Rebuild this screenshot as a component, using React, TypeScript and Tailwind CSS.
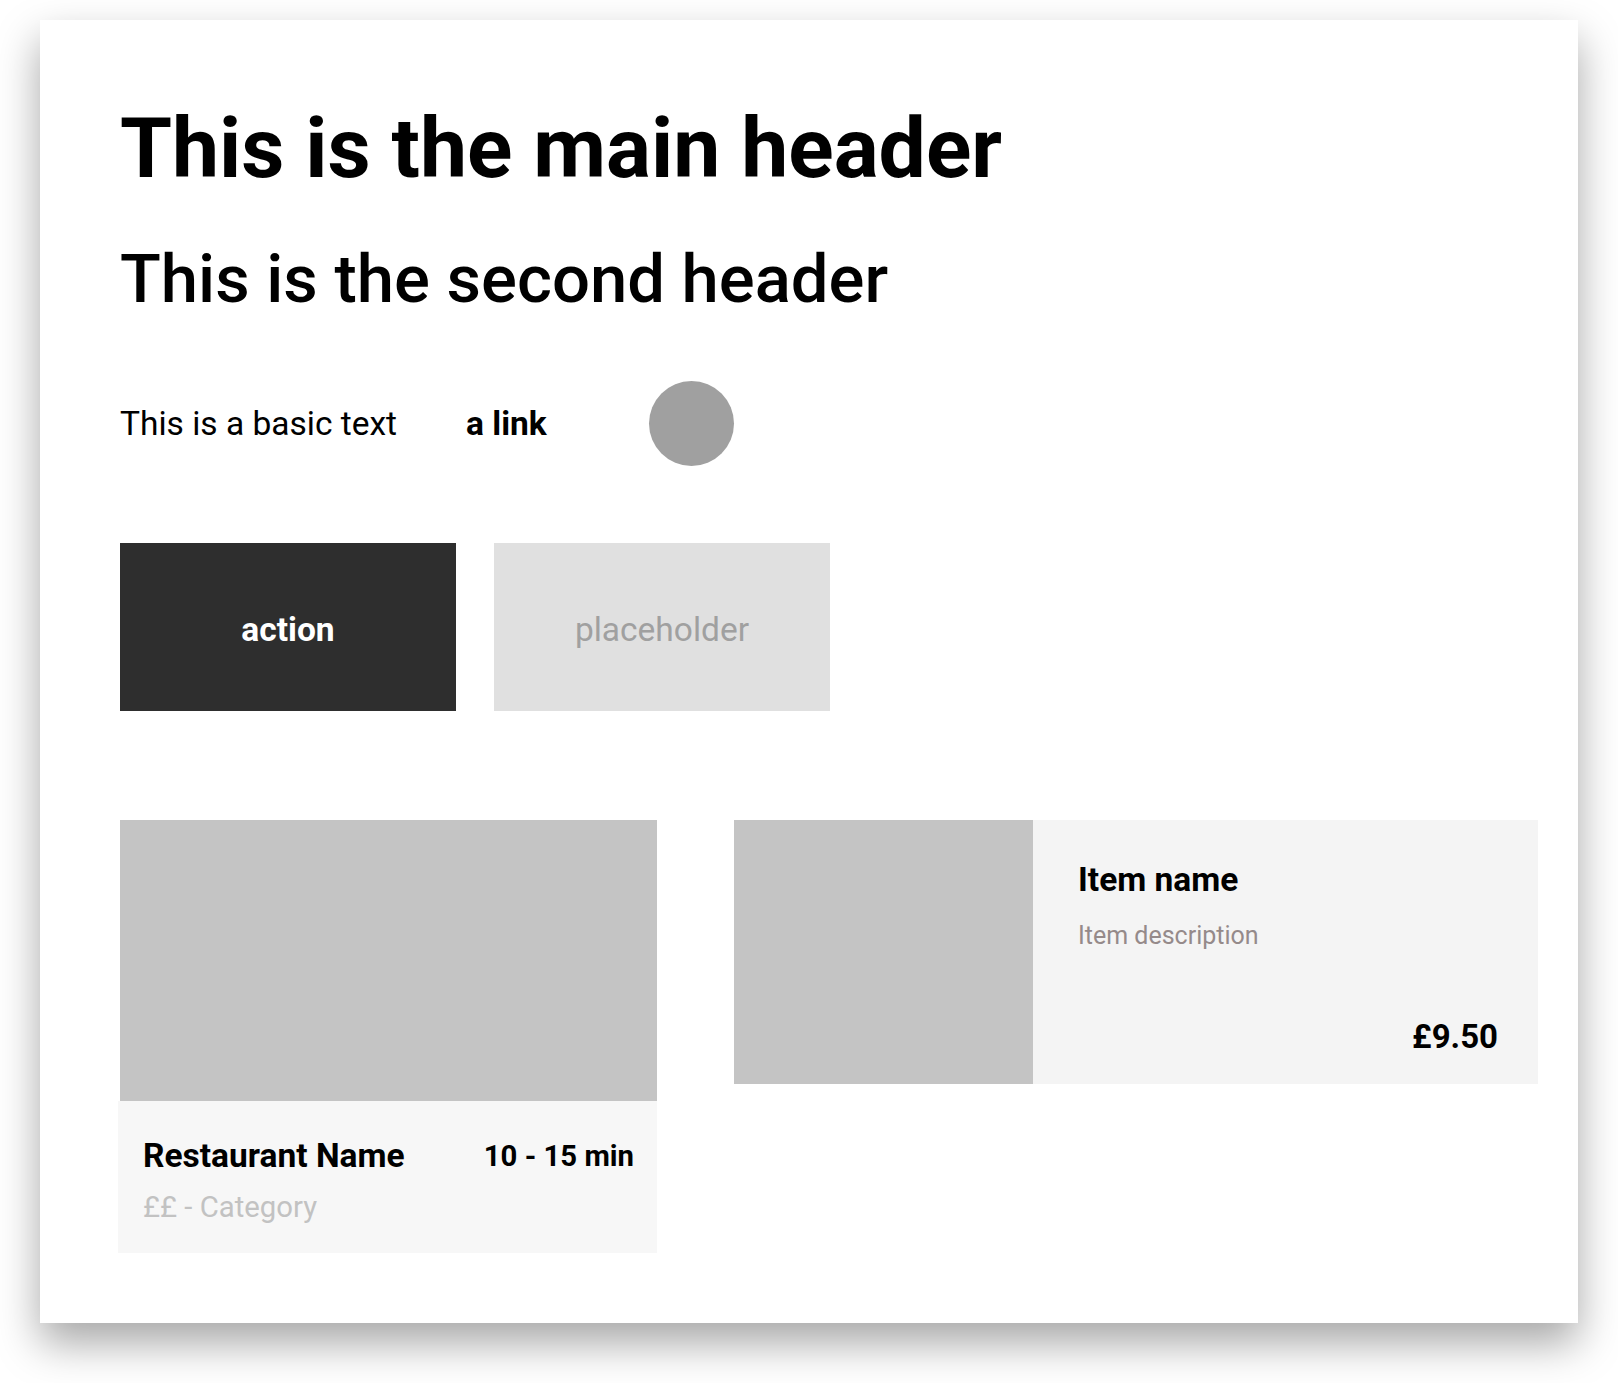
import React from "react";

const font = { fontFamily: "Roboto, 'Noto Sans', sans-serif" };

function RestaurantCard() {
  return (
    <div className="w-[537px] flex flex-col">
      <div className="h-[281px] bg-[#c4c4c4]" />
      <div className="-ml-[2px] bg-[#f7f7f7] pl-[25px] pr-[23px] pt-[36px] pb-[28px]">
        <div className="flex items-center justify-between">
          <span className="text-[33.5px] leading-[38px] font-bold text-black">Restaurant Name</span>
          <span className="text-[29.3px] leading-[38px] font-bold text-black">10 - 15 min</span>
        </div>
        <p className="mt-[15px] text-[29.3px] leading-[35px] text-[#c2c2c2]">££ - Category</p>
      </div>
    </div>
  );
}

function ItemCard() {
  return (
    <div className="w-[804px] h-[264px] flex bg-[#f4f4f4]">
      <div className="w-[299px] bg-[#c4c4c4]" />
      <div className="flex-1 flex flex-col pl-[45px] pr-[40px] pt-[40px] pb-[27px]">
        <h3 className="text-[33.5px] leading-[40px] font-bold text-black">Item name</h3>
        <p className="mt-[21px] text-[25px] leading-[30px] text-[#958a8a]">Item description</p>
        <p className="mt-auto text-right text-[33px] leading-[40px] font-bold text-black">£9.50</p>
      </div>
    </div>
  );
}

export default function App() {
  return (
    <div className="min-h-[1383px] bg-white pt-[20px] pl-[40px]" style={font}>
      <div className="w-[1538px] h-[1303px] bg-white shadow-[0_20px_40px_rgba(0,0,0,0.35)] pl-[80px] pt-[87px]">
        {/* headers */}
        <h1 className="text-[84px] leading-none font-bold text-black">This is the main header</h1>
        <h2 className="mt-[55px] text-[67px] leading-none font-medium text-black">This is the second header</h2>

        {/* text, link, avatar */}
        <div className="mt-[68px] flex items-center">
          <span className="text-[33.5px] leading-[38px] text-black">This is a basic text</span>
          <a href="#" className="ml-[69px] text-[33.5px] leading-[38px] font-bold text-black">a link</a>
          <div className="ml-[102px] w-[85px] h-[85px] rounded-full bg-[#a0a0a0]" />
        </div>

        {/* buttons */}
        <div className="mt-[77px] flex gap-[38px]">
          <button className="w-[336px] h-[168px] pt-[7px] bg-[#2e2e2e] text-white text-[33.5px] font-bold">action</button>
          <button className="w-[336px] h-[168px] pt-[7px] bg-[#e0e0e0] text-[#a0a0a0] text-[33.5px]">placeholder</button>
        </div>

        {/* cards */}
        <div className="mt-[109px] flex items-start gap-[77px]">
          <RestaurantCard />
          <ItemCard />
        </div>
      </div>
    </div>
  );
}
